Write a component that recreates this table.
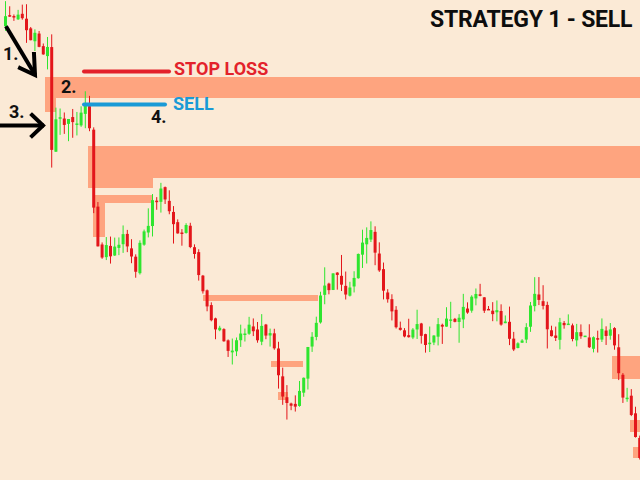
import React from 'react';

type Candle = { x: number; open: number; close: number; high: number; low: number };

// price path in screen coordinates (x, y); y grows downward
const PATH: [number, number][] = [
  [0, 28], [6, 22], [10, 12], [14, 14], [18, 20], [24, 28], [30, 36], [36, 42], [42, 48], [46, 44],
  [50, 158], [54, 118], [58, 116], [64, 126], [70, 118], [76, 128], [82, 112], [87, 106],
  [91, 188], [96, 250], [100, 265], [104, 250], [110, 252], [116, 240], [122, 238], [128, 250],
  [134, 266], [140, 232], [146, 222], [152, 200], [158, 195], [164, 192], [170, 212], [176, 228],
  [182, 226], [188, 240], [194, 258], [200, 280], [206, 305], [212, 322], [218, 326], [224, 342],
  [230, 347], [236, 335], [242, 340], [248, 330], [254, 334], [260, 330], [266, 338], [272, 345],
  [276, 378], [282, 398], [288, 404], [294, 400], [300, 394], [304, 370], [308, 345], [314, 322],
  [318, 305], [324, 290], [330, 280], [336, 276], [342, 288], [348, 292], [354, 272], [360, 250],
  [366, 236], [370, 232], [374, 255], [380, 276], [386, 300], [392, 314], [398, 332], [404, 338],
  [410, 336], [416, 330], [422, 340], [428, 336], [434, 328], [440, 324], [446, 320], [452, 326],
  [458, 320], [464, 310], [470, 304], [476, 296], [482, 304], [488, 310], [494, 316], [500, 325],
  [506, 328], [510, 334], [514, 352], [518, 347], [522, 336], [526, 318], [530, 302], [535, 290],
  [540, 308], [546, 330], [552, 338], [558, 330], [564, 326], [570, 334], [576, 338], [582, 340],
  [588, 346], [594, 338], [600, 330], [606, 330], [612, 330], [616, 364], [620, 392], [626, 397],
  [630, 414], [634, 436], [638, 456], [642, 462],
];

const ZONES: [number, number, number, number][] = [
  [45, 77, 595, 21],
  [45, 98, 11, 14],
  [88, 146, 552, 32],
  [88, 178, 65, 10],
  [93, 195, 60, 8],
  [93, 203, 12, 34],
  [203, 295, 115, 6],
  [271, 361, 32, 6],
  [278, 392, 10, 8],
  [612, 356, 28, 23],
  [630, 420, 10, 12],
  [633, 447, 7, 11],
];

function mulberry32(seed: number) {
  return () => {
    seed |= 0;
    seed = (seed + 0x6d2b79f5) | 0;
    let t = Math.imul(seed ^ (seed >>> 15), 1 | seed);
    t = (t + Math.imul(t ^ (t >>> 7), 61 | t)) ^ t;
    return ((t ^ (t >>> 14)) >>> 0) / 4294967296;
  };
}

function priceAt(x: number) {
  for (let i = 1; i < PATH.length; i++) {
    const [x1, y1] = PATH[i];
    const [x0, y0] = PATH[i - 1];
    if (x <= x1) return y0 + ((y1 - y0) * (x - x0)) / (x1 - x0);
  }
  return PATH[PATH.length - 1][1];
}

function buildCandles(): Candle[] {
  const rand = mulberry32(7);
  const out: Candle[] = [];
  let prev = priceAt(0);
  for (let x = 4; x < 642; x += 4.2) {
    const close = priceAt(x) + (rand() - 0.5) * 16;
    const open = prev + (rand() - 0.5) * 4;
    const top = Math.min(open, close);
    const bot = Math.max(open, close);
    out.push({
      x,
      open,
      close,
      high: top - rand() * rand() * 22,
      low: bot + rand() * rand() * 22,
    });
    prev = close;
  }
  return out;
}

const candles = buildCandles();

function Chart() {
  return (
    <svg className="absolute inset-0" width={640} height={480} viewBox="0 0 640 480">
      {ZONES.map(([x, y, w, h], i) => (
        <rect key={i} x={x} y={y} width={w} height={h} fill="#fea47f" />
      ))}
      {candles.map((c, i) => {
        const color = c.close > c.open ? '#e3161b' : '#2fe52f';
        const top = Math.min(c.open, c.close);
        const h = Math.max(Math.abs(c.close - c.open), 1.5);
        return (
          <g key={i} fill={color}>
            <rect x={c.x + 1} y={c.high} width={1} height={c.low - c.high} />
            <rect x={c.x} y={top} width={3} height={h} />
          </g>
        );
      })}
      <line x1={84} y1={71.5} x2={169} y2={71.5} stroke="#e3222b" strokeWidth={4} strokeLinecap="round" />
      <line x1={84} y1={104.5} x2={165} y2={104.5} stroke="#1a9ad6" strokeWidth={4} strokeLinecap="round" />
      <g stroke="#000" strokeWidth={4} strokeLinecap="square" fill="none">
        <line x1={7} y1={28} x2={34} y2={73} />
        <polyline points="20,68 35,75 34,54" />
        <line x1={0} y1={125.5} x2={42} y2={125.5} />
        <polyline points="32,115 43,125.5 32,136" />
      </g>
    </svg>
  );
}

const label = "absolute leading-none font-bold font-['Roboto','Liberation_Sans',sans-serif]";

export default function App() {
  return (
    <div className="relative h-[480px] w-[640px] overflow-hidden bg-[#fbead6]">
      <Chart />
      <div className={`${label} left-[430px] top-[8px] text-[23px] tracking-[-0.2px] text-[#0d0d0d]`}>
        STRATEGY 1 - SELL
      </div>
      <div className={`${label} left-[174px] top-[60px] text-[18px] text-[#e3222b]`}>STOP LOSS</div>
      <div className={`${label} left-[173px] top-[95px] text-[18px] text-[#1a9ad6]`}>SELL</div>
      <div className={`${label} left-[3px] top-[45px] text-[18px] text-[#111]`}>1.</div>
      <div className={`${label} left-[61px] top-[78px] text-[18px] text-[#111]`}>2.</div>
      <div className={`${label} left-[9px] top-[103px] text-[18px] text-[#111]`}>3.</div>
      <div className={`${label} left-[151px] top-[108px] text-[18px] text-[#111]`}>4.</div>
    </div>
  );
}
